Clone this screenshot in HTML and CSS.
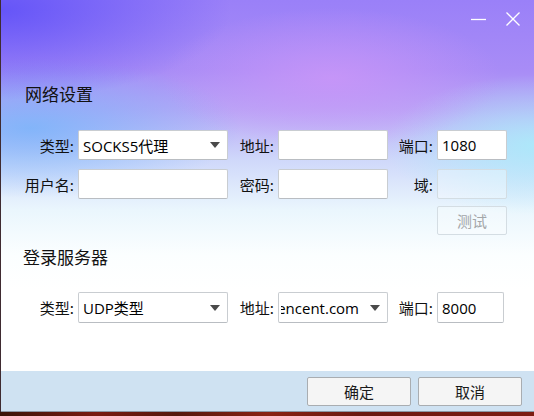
FILE: index.html
```html
<!DOCTYPE html>
<html lang="zh-CN">
<head>
<meta charset="utf-8">
<title>网络设置</title>
<link rel="stylesheet" href="styles.css">
</head>
<body>
<div class="window">
  <div class="main">
    <div class="titlebar">
      <svg class="min" width="15" height="14" viewBox="0 0 15 14"><path d="M0 7.5H15" stroke="#fff" stroke-width="1.3"/></svg>
      <svg class="close" width="14" height="14" viewBox="0 0 14 14"><path d="M0.5 0.5L13.5 13.5M13.5 0.5L0.5 13.5" stroke="#fff" stroke-width="1.3"/></svg>
    </div>
    <h2 class="section-title first">网络设置</h2>
    <div class="form">
      <label class="lbl">类型:</label>
      <div class="field combo"><span class="val">SOCKS5代理</span><i class="arrow"></i></div>
      <label class="lbl">地址:</label>
      <div class="field"></div>
      <label class="lbl">端口:</label>
      <div class="field"><span class="val">1080</span></div>
      <label class="lbl">用户名:</label>
      <div class="field"></div>
      <label class="lbl">密码:</label>
      <div class="field"></div>
      <label class="lbl">域:</label>
      <div class="field disabled"></div>
      <div class="btn-test">测试</div>
    </div>
    <h2 class="section-title second">登录服务器</h2>
    <div class="form form2">
      <label class="lbl">类型:</label>
      <div class="field combo"><span class="val">UDP类型</span><i class="arrow"></i></div>
      <label class="lbl">地址:</label>
      <div class="field combo"><span class="clip"><span class="val">tencent.com</span></span><i class="arrow"></i></div>
      <label class="lbl">端口:</label>
      <div class="field"><span class="val">8000</span></div>
    </div>
  </div>
  <div class="footer">
    <button class="btn">确定</button>
    <button class="btn">取消</button>
  </div>
</div>
</body>
</html>
```

FILE: styles.css
```css
* { box-sizing: border-box; }
html, body { margin: 0; padding: 0; }
body {
  width: 534px;
  height: 416px;
  overflow: hidden;
  font-family: "Noto Sans CJK SC", "Noto Sans", sans-serif;
  background: linear-gradient(90deg, #3a1408 0, #7a1a10 18%, #55180c 33%, #8a2212 50%, #6a1810 68%, #7e1c12 100%);
}
.window {
  width: 534px;
  height: 412px;
  border-left: 1px solid rgba(70, 70, 100, 0.45);
  display: flex;
  flex-direction: column;
}
.main {
  height: 371px;
  background:
    radial-gradient(ellipse 170px 70px at 330px 78px, rgba(202, 150, 248, 0.85), rgba(202, 150, 248, 0)),
    radial-gradient(ellipse 230px 90px at 0px 10px, rgba(95, 80, 248, 0.9), rgba(95, 80, 248, 0)),
    radial-gradient(ellipse 210px 70px at 30px 128px, rgba(120, 180, 250, 0.85), rgba(120, 180, 250, 0)),
    radial-gradient(ellipse 150px 70px at 534px 145px, rgba(170, 235, 250, 0.9), rgba(170, 235, 250, 0)),
    linear-gradient(180deg, #9a80f8 0px, #a88cf6 70px, #b8a6f6 110px, #cfd8fa 160px, #eaf6fd 210px, #fbfeff 255px, #ffffff 290px);
}
.titlebar {
  display: flex;
  justify-content: flex-end;
  align-items: flex-start;
  gap: 20px;
  padding: 12px 14px 0 0;
  height: 26px;
}
.titlebar svg { display: block; }
.section-title {
  margin: 0;
  font-size: 17px;
  font-weight: normal;
  line-height: 22px;
  color: #111;
}
.section-title.first { margin-top: 57px; padding-left: 24px; }
.section-title.second { margin-top: 8px; padding-left: 22px; }
.form {
  display: grid;
  grid-template-columns: 58px 150px 50px 110px 49px 70px;
  grid-auto-rows: 30px;
  row-gap: 9px;
  margin-left: 19px;
  margin-top: 25px;
}
.form2 {
  grid-template-columns: 58px 150px 50px 110px 49px 67px;
  grid-auto-rows: 31px;
  margin-top: 24px;
}
.lbl {
  font-size: 15px;
  color: #111;
  text-align: right;
  padding-right: 4px;
  display: flex;
  align-items: center;
  justify-content: flex-end;
  white-space: nowrap;
}
.field {
  background: #fff;
  border: 1px solid #c9cdd1;
  border-bottom-color: #b9bdc2;
  border-radius: 2px;
  display: flex;
  align-items: center;
  padding: 0 4px;
  font-family: "Open Sans", "Noto Sans CJK SC", sans-serif;
  font-size: 15px;
  color: #000;
  overflow: hidden;
}
.field .val { white-space: nowrap; flex-shrink: 0; }
.combo { justify-content: space-between; padding: 0 7px 0 4px; }
.combo .clip {
  flex: 1;
  display: flex;
  justify-content: flex-end;
  overflow: hidden;
  margin-right: 11px;
  margin-left: -2px;
}
.arrow {
  width: 0;
  height: 0;
  border-left: 5px solid transparent;
  border-right: 5px solid transparent;
  border-top: 6px solid #4a4a4a;
  flex-shrink: 0;
}
.field.disabled {
  background: rgba(255, 255, 255, 0.35);
  border-color: #d3dde3;
}
.btn-test {
  grid-column: 6;
  height: 29px;
  margin-top: -2px;
  border: 1px solid #d4dde3;
  border-radius: 2px;
  background: rgba(255, 255, 255, 0.3);
  color: #a3a6a9;
  font-size: 15px;
  display: flex;
  align-items: center;
  justify-content: center;
}
.footer {
  height: 41px;
  background: #cfe2f2;
  border-bottom: 1px solid #8a96a3;
  display: flex;
  justify-content: flex-end;
  align-items: flex-start;
  gap: 7px;
  padding: 6px 12px 0 0;
}
.btn {
  width: 104px;
  height: 29px;
  font-family: "Noto Sans CJK SC", "Noto Sans", sans-serif;
  font-size: 15px;
  color: #1a1a1a;
  background: #f5f5f5;
  border: 1px solid #a9adb1;
  border-radius: 2px;
  padding: 0;
}
```
